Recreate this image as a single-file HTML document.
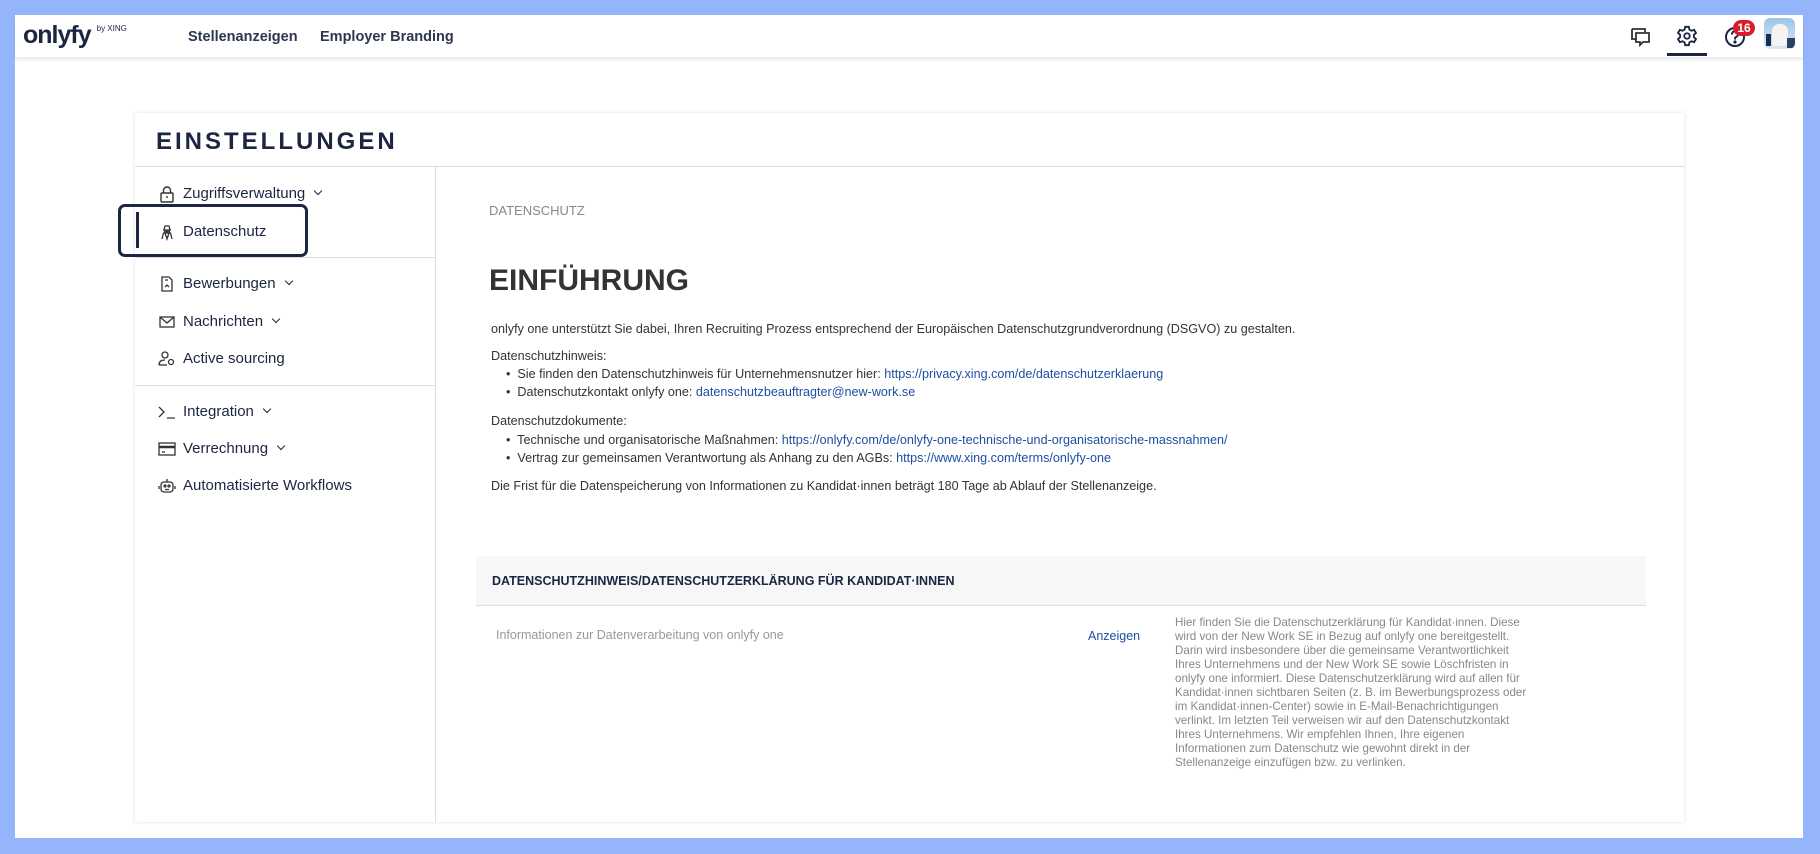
<!DOCTYPE html>
<html><head><meta charset="utf-8"><style>
*{margin:0;padding:0;box-sizing:border-box}
body{width:1820px;height:854px;background:#94b4fb;font-family:"Liberation Sans",Arial,sans-serif;position:relative;overflow:hidden;color:#1c2541}
#app{position:absolute;left:15px;top:15px;width:1788px;height:823px;background:#fff}
#hdr{position:absolute;left:0;top:0;width:1788px;height:43px;background:#fff;box-shadow:0 2px 3px rgba(0,0,0,.08);border-bottom:1px solid #eceef2}
.logo{position:absolute;left:8px;top:6px;font-size:25px;font-weight:bold;color:#1c2541;letter-spacing:-1px}
.logo small{font-size:8px;font-weight:normal;letter-spacing:0;position:relative;top:-12px;left:6px}
.nav{position:absolute;top:14px;font-size:14.5px;color:#2e3650;font-weight:bold}
.card{position:absolute;left:120px;top:98px;width:1549px;height:709px;background:#fff;box-shadow:0 0 4px rgba(0,0,0,.12)}
.title{position:absolute;left:21px;top:15px;font-size:24px;font-weight:bold;letter-spacing:3px;color:#1c2541}
.hl{position:absolute;left:0;top:53px;width:1549px;height:1px;background:#dcdde1}
.sb{position:absolute;left:300px;top:54px;width:1px;height:655px;background:#dcdde1}
.it{position:absolute;left:48px;font-size:15px;color:#1c2541}
.ic{position:absolute;left:-25px;top:0px;width:18px;height:18px}
.chev{display:inline-block;width:6px;height:6px;border-right:1.6px solid #1c2541;border-bottom:1.6px solid #1c2541;transform:rotate(45deg);margin-left:10px;position:relative;top:-4px}
.sd{position:absolute;left:0;width:300px;height:1px;background:#dcdde1}
.c{position:absolute;font-size:12.6px;color:#333;white-space:nowrap}
a{color:#1d4ea3;text-decoration:none}
</style></head><body>
<div id="app">
<div id="hdr">
<div class="logo">onlyfy<small>by XING</small></div>
<div class="nav" style="left:173px">Stellenanzeigen</div>
<div class="nav" style="left:305px">Employer Branding</div>
<svg style="position:absolute;left:1615px;top:11px" width="22" height="22" viewBox="0 0 22 22" fill="none" stroke="#333" stroke-width="1.8"><path d="M2 3h13v3M6 7h13v9h-6l-3 3v-3H6z"/><path d="M2 3v10h4"/></svg>
<svg style="position:absolute;left:1661px;top:10px" width="22" height="22" viewBox="0 0 24 24" fill="none" stroke="#1c2541" stroke-width="2"><circle cx="12" cy="12" r="3"/><path d="M10 2h4l.6 3 2.3 1.3 2.9-1 2 3.4-2.3 2v2.6l2.3 2-2 3.4-2.9-1-2.3 1.3L14 22h-4l-.6-3-2.3-1.3-2.9 1-2-3.4 2.3-2v-2.6l-2.3-2 2-3.4 2.9 1L9.4 5z"/></svg>
<div style="position:absolute;left:1652px;top:38px;width:40px;height:3px;background:#1c2541"></div>
<svg style="position:absolute;left:1709px;top:11px" width="22" height="22" viewBox="0 0 22 22" fill="none" stroke="#1c2541" stroke-width="2"><circle cx="11" cy="11" r="9"/><path d="M8 8.5a3 3 0 1 1 4 2.5c-1 .5-1 1-1 2.5"/><circle cx="11" cy="16" r=".6" fill="#1c2541"/></svg>
<div style="position:absolute;left:1718px;top:5px;width:22px;height:16px;border-radius:8px;background:#d61d2c;color:#fff;font-size:12px;font-weight:bold;text-align:center;line-height:16px">16</div>
<div style="position:absolute;left:1749px;top:3px;width:31px;height:31px;border-radius:6px;background:linear-gradient(#9cc6e6,#d6e9f5);overflow:hidden"><div style="position:absolute;left:8px;top:6px;width:16px;height:22px;background:#f4f4f2;border-radius:7px 7px 3px 3px"></div><div style="position:absolute;left:2px;top:16px;width:5px;height:12px;background:#1b2d55"></div><div style="position:absolute;left:23px;top:20px;width:8px;height:10px;background:#2b3e66"></div></div>
</div>
<div class="card">
<div class="title">EINSTELLUNGEN</div>
<div class="hl"></div>
<div class="sb"></div>
<div class="it" style="top:72px"><svg class="ic" viewBox="0 0 18 18" fill="none" stroke="#333" stroke-width="1.4"><rect x="3" y="8" width="12" height="9" rx="1"/><path d="M5.5 8V5.5a3.5 3.5 0 0 1 7 0V8M9 11v2"/></svg>Zugriffsverwaltung<span class="chev"></span></div>
<div style="position:absolute;left:-17px;top:91px;width:190px;height:53px;border:3.5px solid #1c2541;border-radius:7px"></div>
<div style="position:absolute;left:1px;top:99px;width:3px;height:36px;background:#1c2541"></div>
<div class="it" style="top:110px"><svg class="ic" viewBox="0 0 18 18" fill="none" stroke="#333" stroke-width="1.3"><path d="M5 7h8M6 7l1-4h4l1 4M4 16l1.5-6h7L14 16M7 10l2 6 2-6"/><circle cx="7.5" cy="9" r="1"/><circle cx="10.5" cy="9" r="1"/></svg>Datenschutz</div>
<div class="sd" style="top:144px"></div>
<div class="it" style="top:162px"><svg class="ic" viewBox="0 0 18 18" fill="none" stroke="#333" stroke-width="1.3"><path d="M4 2h7l3 3v11H4z"/><path d="M7 12l2-2 2 2M7 5h3"/></svg>Bewerbungen<span class="chev"></span></div>
<div class="it" style="top:200px"><svg class="ic" viewBox="0 0 18 18" fill="none" stroke="#333" stroke-width="1.3"><rect x="2" y="4" width="14" height="10"/><path d="M2 4l7 6 7-6"/></svg>Nachrichten<span class="chev"></span></div>
<div class="it" style="top:237px"><svg class="ic" viewBox="0 0 18 18" fill="none" stroke="#333" stroke-width="1.3"><circle cx="7" cy="5" r="3"/><path d="M1 15c0-4 3-5 6-5"/><circle cx="13" cy="12" r="2.5"/><path d="M1 15h8"/></svg>Active sourcing</div>
<div class="sd" style="top:272px"></div>
<div class="it" style="top:290px"><svg class="ic" viewBox="0 0 18 18" fill="none" stroke="#333" stroke-width="1.3"><path d="M1 4l5 5-5 5M9 15h8"/></svg>Integration<span class="chev"></span></div>
<div class="it" style="top:327px"><svg class="ic" viewBox="0 0 18 18" fill="none" stroke="#333" stroke-width="1.3"><rect x="1" y="3" width="16" height="12"/><path d="M1 7h16" stroke-width="2.5"/><path d="M4 12h3"/></svg>Verrechnung<span class="chev"></span></div>
<div class="it" style="top:364px"><svg class="ic" viewBox="0 0 18 18" fill="none" stroke="#333" stroke-width="1.3"><rect x="3" y="5" width="12" height="10" rx="3"/><circle cx="7" cy="9" r="1"/><circle cx="11" cy="9" r="1"/><path d="M9 2v3M1 9v3M17 9v3M7 12.5h4"/></svg>Automatisierte Workflows</div>

<div class="c" style="left:354px;top:90px;font-size:13px;color:#888">DATENSCHUTZ</div>
<div class="c" style="left:354px;top:151px;font-size:30px;font-weight:bold;color:#333">EINFÜHRUNG</div>
<div class="c" style="left:356px;top:209px">onlyfy one unterstützt Sie dabei, Ihren Recruiting Prozess entsprechend der Europäischen Datenschutzgrundverordnung (DSGVO) zu gestalten.</div>
<div class="c" style="left:356px;top:236px">Datenschutzhinweis:</div>
<div class="c" style="left:371px;top:254px">•&nbsp; Sie finden den Datenschutzhinweis für Unternehmensnutzer hier: <a>https://privacy.xing.com/de/datenschutzerklaerung</a></div>
<div class="c" style="left:371px;top:272px">•&nbsp; Datenschutzkontakt onlyfy one: <a>datenschutzbeauftragter@new-work.se</a></div>
<div class="c" style="left:356px;top:301px">Datenschutzdokumente:</div>
<div class="c" style="left:371px;top:320px">•&nbsp; Technische und organisatorische Maßnahmen: <a>https://onlyfy.com/de/onlyfy-one-technische-und-organisatorische-massnahmen/</a></div>
<div class="c" style="left:371px;top:338px">•&nbsp; Vertrag zur gemeinsamen Verantwortung als Anhang zu den AGBs: <a>https://www.xing.com/terms/onlyfy-one</a></div>
<div class="c" style="left:356px;top:366px">Die Frist für die Datenspeicherung von Informationen zu Kandidat·innen beträgt 180 Tage ab Ablauf der Stellenanzeige.</div>

<div style="position:absolute;left:341px;top:443px;width:1170px;height:50px;background:#f7f7f7;border-bottom:1px solid #dcdde1"></div>
<div class="c" style="left:357px;top:461px;font-weight:bold;color:#1c2541;font-size:12.5px">DATENSCHUTZHINWEIS/DATENSCHUTZERKLÄRUNG FÜR KANDIDAT·INNEN</div>
<div class="c" style="left:361px;top:515px;color:#999;font-size:12.5px">Informationen zur Datenverarbeitung von onlyfy one</div>
<div class="c" style="left:953px;top:516px;font-size:12.5px"><a>Anzeigen</a></div>
<div class="c" style="left:1040px;top:503px;color:#888;font-size:11.6px;line-height:14px">Hier finden Sie die Datenschutzerklärung für Kandidat·innen. Diese<br>wird von der New Work SE in Bezug auf onlyfy one bereitgestellt.<br>Darin wird insbesondere über die gemeinsame Verantwortlichkeit<br>Ihres Unternehmens und der New Work SE sowie Löschfristen in<br>onlyfy one informiert. Diese Datenschutzerklärung wird auf allen für<br>Kandidat·innen sichtbaren Seiten (z. B. im Bewerbungsprozess oder<br>im Kandidat·innen-Center) sowie in E-Mail-Benachrichtigungen<br>verlinkt. Im letzten Teil verweisen wir auf den Datenschutzkontakt<br>Ihres Unternehmens. Wir empfehlen Ihnen, Ihre eigenen<br>Informationen zum Datenschutz wie gewohnt direkt in der<br>Stellenanzeige einzufügen bzw. zu verlinken.</div>
</div>
</div>
</body></html>
